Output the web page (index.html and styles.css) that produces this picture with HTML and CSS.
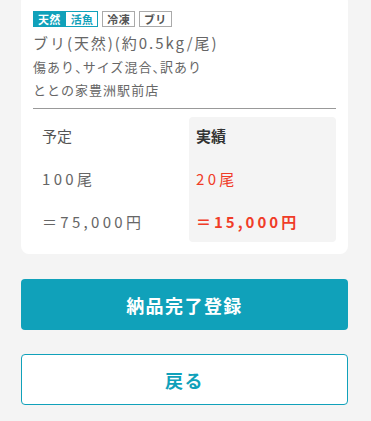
FILE: index.html
```html
<!DOCTYPE html>
<html>
<head>
	<meta charset="UTF-8">
	<title>納品完了登録</title>
	<link rel="stylesheet" href="styles.css">
</head>
<body>
	<div class="page">

		<div class="card">
			<div class="tags">
				<span class="tag-pair">
					<span class="tag tag-fill">天然</span><span class="tag tag-line">活魚</span>
				</span>
				<span class="tag tag-gray">冷凍</span>
				<span class="tag tag-gray">ブリ</span>
			</div>

			<div class="item-name">ブリ(天然)(約0.5kg/尾)</div>
			<div class="item-sub">傷あり<span class="punct">、</span>サイズ混合<span class="punct">、</span>訳あり</div>
			<div class="item-sub">ととの家豊洲駅前店</div>

			<div class="result">
				<div class="col col-plan">
					<div class="col-head">予定</div>
					<div class="col-num">100尾</div>
					<div class="col-num">＝75,000円</div>
				</div>
				<div class="col col-real">
					<div class="col-head">実績</div>
					<div class="col-num red">20尾</div>
					<div class="col-num red strong">＝15,000円</div>
				</div>
			</div>
		</div>

		<button class="btn btn-main">納品完了登録</button>
		<button class="btn btn-back">戻る</button>

	</div>
</body>
</html>
```

FILE: styles.css
```css
html {
	margin: 0;
}

body {
	margin: 0;
	background: #f4f4f4;
	font-family: "Noto Sans CJK JP", "Noto Sans", sans-serif;
	color: #666;
}

.page {
	padding: 0 23px 16px 21px;
}

.card {
	background: #fff;
	border-radius: 8px;
	margin-top: -6px;
	padding: 17px 12px 12px 12px;
}

/* tags */
.tags {
	display: flex;
	gap: 4px;
	height: 16px;
}

.tag-pair {
	display: flex;
	border: 1px solid #10a1ba;
}

.tag {
	font-size: 11px;
	font-weight: bold;
	line-height: 14px;
	padding: 0 4px;
	letter-spacing: 0.03em;
}

.tag-fill {
	background: #10a1ba;
	color: #fff;
	padding: 0 5px 0 4px;
}

.tag-line {
	color: #10a1ba;
	padding: 0 4px 0 5px;
}

.tag-gray {
	border: 1px solid #aaa;
	color: #555;
	padding: 0 4px;
}

/* item text */
.item-name {
	margin-top: 4px;
	font-size: 15px;
	line-height: 24px;
	letter-spacing: 0.13em;
	color: #666;
}

.item-sub {
	font-size: 13px;
	line-height: 23px;
	letter-spacing: 0.08em;
	color: #666;
}

.punct {
	font-feature-settings: "halt";
}

/* plan / real */
.result {
	margin-top: 7px;
	border-top: 1px solid #999;
	padding-top: 8px;
	display: grid;
	grid-template-columns: 156px 1fr;
}

.col {
	display: flex;
	flex-direction: column;
	gap: 19px;
	padding: 7px 8px 8px 9px;
}

.col-real {
	background: #f4f4f4;
	border-radius: 4px;
	padding-left: 7px;
}

.col-head {
	font-size: 15px;
	line-height: 24px;
	color: #555;
}

.col-real .col-head {
	color: #333;
	font-weight: bold;
}

.col-num {
	font-size: 15px;
	line-height: 24px;
	letter-spacing: 0.22em;
	color: #666;
}

.red {
	color: #f03c28;
}

.strong {
	font-weight: bold;
	letter-spacing: 0.2em;
}

/* buttons */
.btn {
	display: block;
	width: 100%;
	height: 51px;
	border-radius: 4px;
	font-family: "Noto Sans CJK JP", "Noto Sans", sans-serif;
	font-size: 18px;
	font-weight: bold;
	letter-spacing: 0.08em;
	cursor: pointer;
}

.btn-main {
	margin-top: 25px;
	background: #10a1ba;
	border: none;
	color: #fff;
}

.btn-back {
	margin-top: 24px;
	background: #fff;
	border: 1px solid #10a1ba;
	color: #10a1ba;
}
```
